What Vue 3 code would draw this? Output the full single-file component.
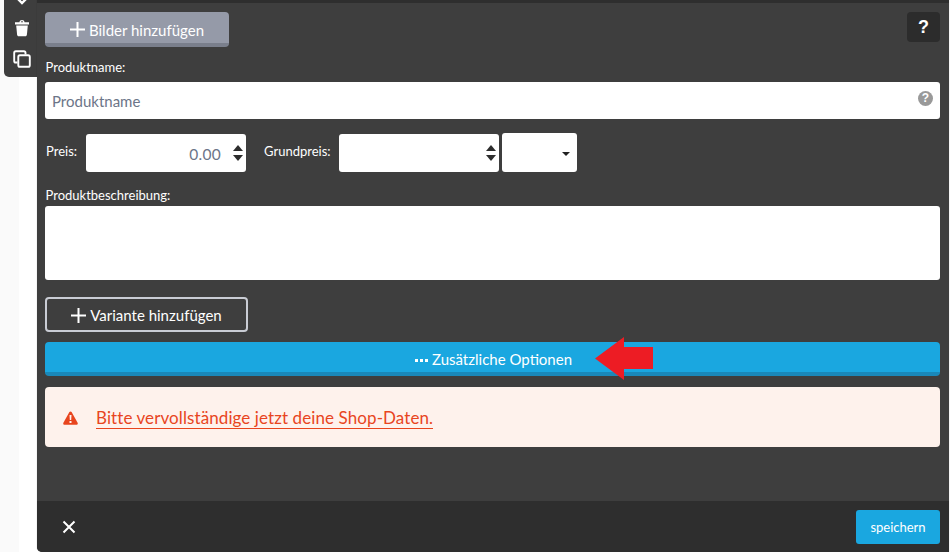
<script setup>
const plus = 'M7.5 0v15M0 7.5h15'
</script>

<template>
  <div class="page">
    <aside class="tools">
      <svg class="chev" width="12" height="6" viewBox="0 0 12 6"><path d="M2 0l4 4 4-4" fill="none" stroke="#fff" stroke-width="2.4"/></svg>
      <svg class="tool" width="16" height="18" viewBox="0 0 16 18">
        <path d="M1 3.2h14v2.2H1zM5.500 3.2c0-3 5-3 5 0H9.100c0-1.200-2.200-1.200-2.200 0z" fill="#fff"/>
        <path d="M2.200 6.400h11.600l-.9 9.400c-.1.9-.7 1.500-1.600 1.500H4.700c-.9 0-1.500-.6-1.600-1.500z" fill="#fff"/>
      </svg>
      <svg class="tool" width="18" height="18" viewBox="0 0 18 18">
        <path d="M12.500 4.500V2.800c0-1-.6-1.600-1.600-1.600H2.800c-1 0-1.600.6-1.600 1.600v8.100c0 1 .6 1.600 1.600 1.600h1.700" fill="none" stroke="#fff" stroke-width="1.900"/>
        <rect x="5.300" y="5.300" width="11.500" height="11.500" rx="1.600" fill="none" stroke="#fff" stroke-width="1.900"/>
      </svg>
    </aside>

    <main class="panel">
      <div class="content">
        <div class="top-row">
          <button class="btn grey">
            <svg width="15" height="15" viewBox="0 0 15 15"><path :d="plus" stroke="#fff" stroke-width="2" fill="none"/></svg>
            Bilder hinzufügen
          </button>
          <span class="help">?</span>
        </div>

        <label class="label name-label">Produktname:</label>
        <div class="field name-field">
          <span class="placeholder">Produktname</span>
          <span class="hint">?</span>
        </div>

        <div class="price-row">
          <label class="label price-label">Preis:</label>
          <div class="field num price">
            <span class="value">0.00</span>
            <span class="spin"><i class="up"></i><i class="down"></i></span>
          </div>
          <label class="label price-label base-label">Grundpreis:</label>
          <div class="field num base">
            <span class="spin"><i class="up"></i><i class="down"></i></span>
          </div>
          <div class="field select"><i class="caret"></i></div>
        </div>

        <label class="label desc-label">Produktbeschreibung:</label>
        <div class="field desc"></div>

        <button class="btn outline">
          <svg width="15" height="15" viewBox="0 0 15 15"><path :d="plus" stroke="#fff" stroke-width="2" fill="none"/></svg>
          Variante hinzufügen
        </button>

        <div class="options-wrap">
          <button class="btn blue">
            <span class="dots"><i></i><i></i><i></i></span>
            Zusätzliche Optionen
          </button>
          <svg class="arrow" width="60" height="46" viewBox="0 0 60 46">
            <path d="M1 22.500L30 1v10h29v22H30v11z" fill="#ed1c24"/>
          </svg>
        </div>

        <div class="alert">
          <svg width="15" height="14" viewBox="0 0 15 14">
            <path d="M7.500.4c.5 0 .9.3 1.100.7l6 10.700c.5.9-.1 2-1.100 2h-12c-1 0-1.600-1.100-1.100-2l6-10.700c.2-.4.6-.7 1.100-.7z" fill="#e8451e"/>
            <path d="M6.500 4h2l-.3 5H6.800zM6.500 10h2v2h-2z" fill="#fff3ee"/>
          </svg>
          <a class="alert-link">Bitte vervollständige jetzt deine Shop-Daten.</a>
        </div>
      </div>

      <footer class="footer">
        <svg width="14" height="14" viewBox="0 0 14 14"><path d="M1.500 1.500l11 11M12.500 1.500l-11 11" stroke="#fff" stroke-width="2" fill="none"/></svg>
        <button class="save">speichern</button>
      </footer>
    </main>
  </div>
</template>

<style>
html, body { margin: 0; padding: 0; overflow: hidden; background: #fff; }
</style>

<style scoped>
.page {
  width: 950px;
  height: 552px;
  display: flex;
  align-items: flex-start;
  padding-left: 4px;
  box-sizing: border-box;
  overflow: hidden;
  background: linear-gradient(90deg, #fafafa 19px, #fff 19px);
  font-family: Lato, "Open Sans", sans-serif;
  color: #fff;
}
.tools {
  width: 33px;
  height: 77px;
  flex: none;
  background: #3e3e3e;
  border-bottom-left-radius: 5px;
  display: flex;
  flex-direction: column;
  align-items: center;
  padding-left: 3px;
  box-sizing: border-box;
}
.chev { margin-top: -1px; }
.tool { display: block; }
.tools .tool:nth-of-type(2) { margin-top: 14px; }
.tools .tool:nth-of-type(3) { margin-top: 13px; }
.panel {
  width: 912px;
  height: 552px;
  flex: none;
  background: #3e3e3e;
  border-top: 3px solid #2e2e2e;
  border-bottom-left-radius: 5px;
  box-sizing: border-box;
  display: flex;
  flex-direction: column;
  box-shadow: 0 0 1px rgba(0,0,0,.4);
}
.content {
  flex: 1;
  padding: 9px 9px 0 8px;
  display: flex;
  flex-direction: column;
  align-items: stretch;
}
.top-row {
  display: flex;
  justify-content: space-between;
  align-items: flex-start;
}
.btn {
  font-family: inherit;
  color: #fff;
  font-size: 15px;
  border: 0;
  border-radius: 4px;
  display: flex;
  align-items: center;
  justify-content: center;
  gap: 4px;
  box-sizing: border-box;
  padding: 0;
}
.grey {
  width: 184px;
  height: 35px;
  padding-top: 4px;
  background: #959aa8;
  border-bottom: 4px solid #7a7f8c;
}
.help {
  width: 33px;
  height: 30px;
  border-radius: 4px;
  background: #2c2c2c;
  font-family: "Liberation Sans", sans-serif;
  font-weight: 700;
  font-size: 18px;
  line-height: 30px;
  text-align: center;
}
.label {
  font-size: 13px;
  line-height: 16px;
  color: #fff;
  padding-left: .5px;
}
.name-label { margin-top: 12px; }
.field {
  background: #fff;
  border-radius: 3px;
  box-sizing: border-box;
}
.name-field {
  margin-top: 7px;
  height: 37px;
  display: flex;
  align-items: center;
  justify-content: space-between;
  padding: 0 7px;
  font-size: 15px;
  color: #6c7588;
}
.hint {
  width: 15px;
  height: 15px;
  margin-top: -5px;
  border-radius: 50%;
  background: #999;
  color: #fff;
  font-family: "Liberation Sans", sans-serif;
  font-weight: 700;
  font-size: 12px;
  line-height: 15px;
  text-align: center;
}
.price-row {
  margin-top: 14px;
  height: 39px;
  display: flex;
  align-items: flex-start;
}
.price-label { margin-top: 10px; padding-left: 1px; }
.num {
  height: 38px;
  display: flex;
  align-items: center;
  justify-content: flex-end;
  padding-right: 3px;
  margin-top: 1px;
}
.price { width: 160px; margin-left: 9px; }
.base { width: 160px; margin-left: 8px; }
.base-label { margin-left: 17px; }
.value { font-size: 15.500px; color: #6c7588; margin: 2px 12px 0 0; letter-spacing: .3px; }
.spin {
  display: flex;
  flex-direction: column;
  gap: 4px;
}
.spin i {
  display: block;
  width: 0;
  height: 0;
  border-left: 5.500px solid transparent;
  border-right: 5.500px solid transparent;
}
.spin .up { border-bottom: 6px solid #2d2d2d; }
.spin .down { border-top: 6px solid #2d2d2d; }
.select {
  width: 75px;
  height: 39px;
  margin-left: 3px;
  display: flex;
  align-items: center;
  justify-content: flex-end;
  padding-right: 7px;
}
.caret {
  width: 0;
  height: 0;
  margin-top: 2px;
  border-left: 4px solid transparent;
  border-right: 4px solid transparent;
  border-top: 4px solid #222;
}
.desc-label { margin-top: 15px; }
.desc { margin-top: 3px; height: 74px; }
.outline {
  margin-top: 17px;
  width: 203px;
  height: 35px;
  padding-top: 1px;
  background: transparent;
  border: 2px solid #c9ccd4;
}
.options-wrap {
  position: relative;
  margin-top: 10px;
}
.blue {
  width: 100%;
  height: 34px;
  padding: 4px 0 0 2px;
  background: #1aa7e0;
  border-bottom: 4px solid #1a88b9;
}
.dots {
  display: inline-flex;
  gap: 2px;
  margin-top: 2px;
}
.dots i {
  width: 3px;
  height: 3px;
  background: #fff;
}
.arrow {
  position: absolute;
  left: 549px;
  top: -6px;
}
.alert {
  margin-top: 11px;
  height: 60px;
  padding: 2px 0 0 18px;
  box-sizing: border-box;
  background: #fef2ec;
  border-radius: 4px;
  display: flex;
  align-items: center;
  gap: 18px;
}
.alert-link {
  color: #e8451e;
  font-size: 17px;
  line-height: 20px;
  letter-spacing: .09px;
  border-bottom: 1px solid #e8451e;
}
.footer {
  flex: none;
  height: 51px;
  background: #2e2e2e;
  display: flex;
  align-items: center;
  justify-content: space-between;
  padding: 0 9px 0 25px;
  border-bottom-left-radius: 5px;
}
.save {
  width: 84px;
  height: 34px;
  margin-top: 1px;
  border: 0;
  border-radius: 3px;
  background: #1aa7e0;
  color: #fff;
  font-family: inherit;
  font-size: 13px;
  padding: 0;
}
</style>
